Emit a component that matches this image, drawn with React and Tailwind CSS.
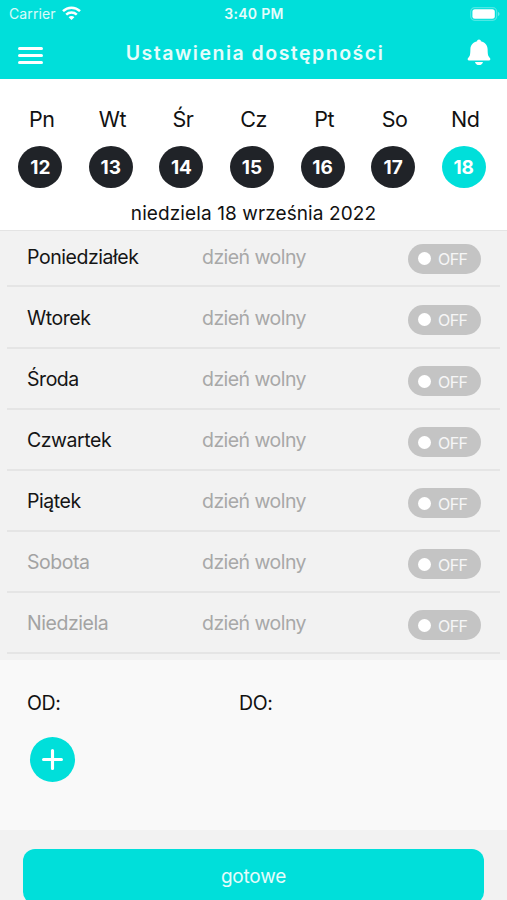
const week = [
  { label: "Pn", day: 12 },
  { label: "Wt", day: 13 },
  { label: "Śr", day: 14 },
  { label: "Cz", day: 15 },
  { label: "Pt", day: 16 },
  { label: "So", day: 17 },
  { label: "Nd", day: 18, selected: true },
];

const schedule = [
  { name: "Poniedziałek" },
  { name: "Wtorek" },
  { name: "Środa" },
  { name: "Czwartek" },
  { name: "Piątek" },
  { name: "Sobota", muted: true },
  { name: "Niedziela", muted: true },
];

function WifiIcon() {
  return (
    <svg width="19" height="15" viewBox="0 0 19 15" fill="none" stroke="white" strokeWidth="2.5">
      <path d="M1 5.2C5.8.6 13.2.6 18 5.2" />
      <path d="M4.2 8.6c3-2.8 7.6-2.8 10.6 0" />
      <path d="M9.5 14 6.6 11.2c1.6-1.5 4.2-1.5 5.8 0Z" fill="white" stroke="none" />
    </svg>
  );
}

function BatteryIcon() {
  return (
    <svg width="30" height="14" viewBox="0 0 30 14" fill="none">
      <rect x="0.7" y="0.7" width="26" height="12.6" rx="4" stroke="white" strokeOpacity="0.3" strokeWidth="1.2" />
      <rect x="2.4" y="2.2" width="22.4" height="9.6" rx="2.5" fill="white" />
      <path d="M28 5v4c.9-.3 1.5-1.1 1.5-2s-.6-1.7-1.5-2Z" fill="white" fillOpacity="0.4" />
    </svg>
  );
}

function BellIcon() {
  return (
    <svg width="24" height="27" viewBox="0 0 24 27" fill="white">
      <path d="M12 .5c-1.1 0-1.9.8-1.9 1.7C6.2 3 3.600 6 3.400 10c-.1 3.200-.1 5.200-.7 6.800-.4 1-1.100 1.700-1.600 2.300-.9 1-.4 2.500.9 2.500h20c1.300 0 1.800-1.500.9-2.500-.5-.6-1.200-1.300-1.600-2.300-.6-1.600-.6-3.600-.7-6.800-.2-4-2.800-7-6.700-7.800 0-.9-.8-1.700-1.900-1.700Z" />
      <path d="M8 23h8c-.4 1.900-2 3.100-4 3.100s-3.600-1.200-4-3.100Z" />
    </svg>
  );
}

function Header() {
  return (
    <header className="h-[79px] bg-[#00dfda] text-white">
      <div className="grid h-[27px] grid-cols-3 items-center pr-[7px] pl-[9px] text-[14px]">
        <div className="flex items-center gap-[6px] text-white/85">
          <span className="tracking-[0.1px]">Carrier</span>
          <WifiIcon />
        </div>
        <span className="pr-[1px] text-center text-[14px] font-semibold tracking-[0.3px] text-white/90">3:40 PM</span>
        <div className="flex justify-end">
          <BatteryIcon />
        </div>
      </div>
      <div className="flex h-[51px] items-center justify-between pr-[16px] pl-[18px]">
        <button className="flex w-[25px] flex-col gap-[4px] pt-[5px]" aria-label="Menu">
          <span className="h-[3px] rounded-full bg-white" />
          <span className="h-[3px] rounded-full bg-white" />
          <span className="h-[3px] rounded-full bg-white" />
        </button>
        <h1 className="pt-[1px] text-[19.5px] leading-[50px] font-semibold tracking-[1.5px] whitespace-nowrap text-white/90">
          Ustawienia dostępności
        </h1>
        <button aria-label="Powiadomienia">
          <BellIcon />
        </button>
      </div>
    </header>
  );
}

function WeekStrip() {
  return (
    <section className="h-[152px] border-b border-[#e4e4e4] bg-white pt-[25px] text-[#111]">
      <div className="grid grid-cols-7 pr-[8px] pl-[5px]">
        {week.map(({ label, day, selected }) => (
          <div key={day} className="flex flex-col items-center">
            <span className="pl-[3px] text-[21.5px] leading-[30px] tracking-[-0.5px]">{label}</span>
            <span
              className={`mt-[12px] flex h-[42px] w-[44px] items-center justify-center rounded-[50%] pt-[2px] text-[19px] font-bold text-white ${
                selected ? "bg-[#00dfda]" : "bg-[#202328]"
              }`}
            >
              {day}
            </span>
          </div>
        ))}
      </div>
      <p className="mt-[14px] text-center text-[19px] leading-[24px] tracking-[0.1px]">niedziela 18 września 2022</p>
    </section>
  );
}

function Toggle() {
  return (
    <button className="mt-[6px] flex h-[30px] w-[73px] items-center rounded-full bg-[#c4c4c4] pl-[10px] text-white" role="switch" aria-checked="false">
      <span className="h-[13px] w-[13px] rounded-full bg-white" />
      <span className="ml-[7px] pt-[1px] text-[16px] tracking-[-0.6px] text-white/85">OFF</span>
    </button>
  );
}

function DayRow({ name, muted }) {
  return (
    <li className="flex h-[61.1px] items-center border-b-2 border-[#e5e5e5] pr-[19px] pl-[20px] text-[19.5px]">
      <span className={`w-[175px] pt-[3px] tracking-[-0.45px] ${muted ? "text-[#a3a3a3]" : "text-[#151515]"}`}>{name}</span>
      <span className="flex-1 pt-[3px] tracking-[-0.55px] text-[#a8a8a8]">dzień wolny</span>
      <Toggle />
    </li>
  );
}

export default function App() {
  return (
    <div className="h-[900px] w-[507px] overflow-hidden bg-[#f2f2f2] font-['Inter',sans-serif]">
      <Header />
      <WeekStrip />
      <ul className="mx-[7px] -mt-[4.7px] h-[433.7px]">
        {schedule.map((row) => (
          <DayRow key={row.name} {...row} />
        ))}
      </ul>
      <section className="h-[170px] bg-[#f9f9f9] pt-[30px] pl-[27px] text-[19.5px] text-[#111]">
        <div className="flex leading-[26px] tracking-[-0.4px]">
          <span className="w-[212px]">OD:</span>
          <span>DO:</span>
        </div>
        <button className="mt-[21px] ml-[3px] flex h-[45px] w-[45px] items-center justify-center rounded-full bg-[#00dfda]" aria-label="Dodaj">
          <svg width="21" height="21" viewBox="0 0 20 20" stroke="white" strokeWidth="3" strokeLinecap="round">
            <path d="M10 1.5v17M1.5 10h17" />
          </svg>
        </button>
      </section>
      <div className="px-[23px] pt-[19px]">
        <button className="h-[55px] w-full rounded-[12px] bg-[#00dfda] pt-[2px] text-[19px] tracking-[-0.2px] text-white/90">gotowe</button>
      </div>
    </div>
  );
}
